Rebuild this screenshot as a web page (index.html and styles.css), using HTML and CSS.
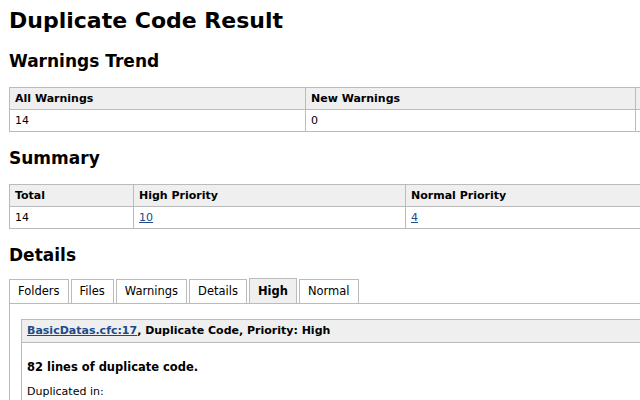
FILE: index.html
```html
<!DOCTYPE html>
<html>
<head>
<meta charset="utf-8">
<title>Duplicate Code Result</title>
<link rel="stylesheet" href="styles.css">
</head>
<body>
<div class="page">
  <h1 class="title">Duplicate Code Result</h1>

  <h2 class="section">Warnings Trend</h2>
  <table class="grid trend">
    <tr><th class="c1">All Warnings</th><th class="c2">New Warnings</th><th></th></tr>
    <tr><td>14</td><td>0</td><td></td></tr>
  </table>

  <h2 class="section">Summary</h2>
  <table class="grid summary">
    <tr><th class="s1">Total</th><th class="s2">High Priority</th><th class="s3">Normal Priority</th><th></th></tr>
    <tr><td>14</td><td><a href="#">10</a></td><td><a href="#">4</a></td><td></td></tr>
  </table>

  <h2 class="section section-tabs">Details</h2>
  <div class="tabs">
    <span class="tab">Folders</span>
    <span class="tab">Files</span>
    <span class="tab">Warnings</span>
    <span class="tab">Details</span>
    <span class="tab active">High</span>
    <span class="tab">Normal</span>
  </div>
  <div class="tab-body">
    <div class="panel">
      <div class="panel-head"><a href="#">BasicDatas.cfc:17</a>, Duplicate Code, Priority: High</div>
      <div class="panel-body">
        <p class="lines">82 lines of duplicate code.</p>
        <p class="dup">Duplicated in:</p>
      </div>
    </div>
  </div>
</div>
</body>
</html>
```
FILE: styles.css
```css
html, body {
  margin: 0;
  padding: 0;
  background: #fff;
  overflow: hidden;
}
body {
  font-family: "DejaVu Sans", Verdana, sans-serif;
  font-size: 11px;
  color: #000;
}
.page {
  padding: 0 0 0 9px;
  width: 1000px;
}
.title {
  font-size: 22px;
  line-height: 29px;
  margin: 6px 0 0 0;
  font-weight: bold;
}
.section {
  font-size: 17px;
  line-height: 22px;
  margin: 15px 0 15px 0;
  font-weight: bold;
}
.section-tabs {
  margin-bottom: 12px;
}
.grid {
  border-collapse: collapse;
  width: 900px;
}
.grid th, .grid td {
  border: 1px solid #bbb;
  padding: 3px 4px 3px 5px;
  line-height: 15px;
  text-align: left;
  vertical-align: middle;
}
.grid th {
  background: #efefef;
  font-weight: bold;
}
.trend .c1 { width: 286px; }
.trend .c2 { width: 320px; }
.summary .s1 { width: 114px; }
.summary .s2 { width: 262px; }
.summary .s3 { width: 300px; }
a {
  color: #204a87;
  text-decoration: underline;
}
.tabs {
  display: flex;
  align-items: flex-end;
  gap: 2px;
  height: 25px;
}
.tab {
  border: 1px solid #bbb;
  border-bottom: none;
  padding: 0 8px;
  height: 23px;
  line-height: 23px;
  font-size: 11.5px;
  background: #fff;
}
.tab.active {
  background: #efefef;
  font-weight: bold;
  height: 24px;
  line-height: 24px;
}
.tab-body {
  border-top: 1px solid #bbb;
  border-left: 1px solid #bbb;
  padding: 15px 0 0 11px;
  height: 200px;
}
.panel {
  border: 1px solid #bbb;
  border-right: none;
}
.panel-head {
  background: #efefef;
  font-weight: bold;
  padding: 3px 5px;
  line-height: 16px;
  border-bottom: 1px solid #bbb;
}
.panel-body {
  padding: 0 5px;
}
.lines {
  font-weight: bold;
  font-size: 11.5px;
  margin: 16px 0 0 0;
  line-height: 16px;
}
.dup {
  margin: 9px 0 0 0;
  line-height: 16px;
}
```
